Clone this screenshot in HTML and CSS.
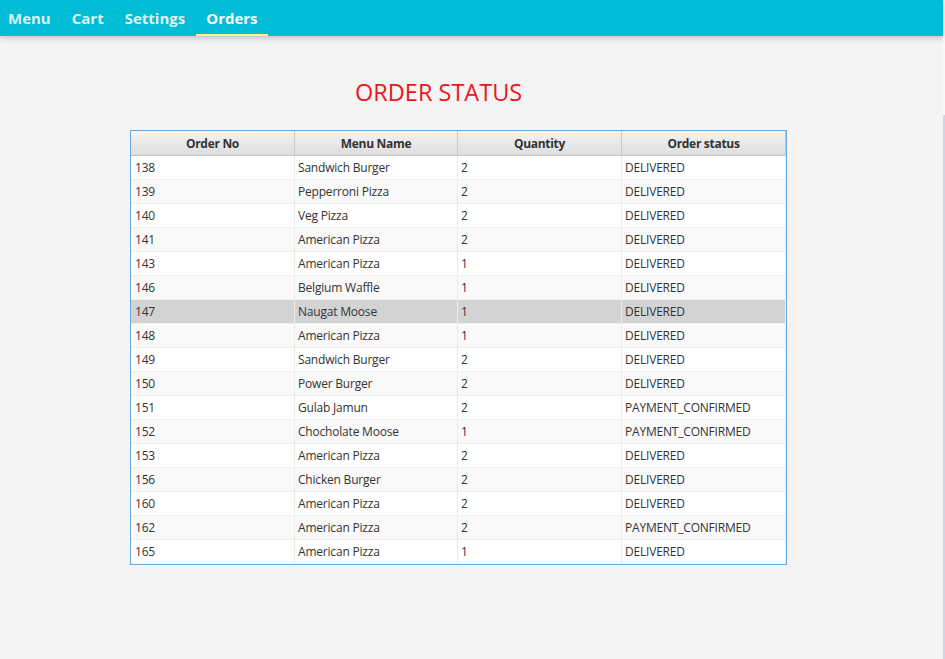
FILE: index.html
```html
<!DOCTYPE html>
<html>
<head>
<meta charset="utf-8">
<link rel="stylesheet" href="styles.css">
</head>
<body>
<div class="app">
  <div class="main">
    <nav class="topbar">
      <div class="tab">Menu</div>
      <div class="tab">Cart</div>
      <div class="tab">Settings</div>
      <div class="tab active">Orders</div>
    </nav>
    <div class="content">
      <h1 class="title">ORDER STATUS</h1>
      <div class="table-wrap">
        <table class="orders">
          <colgroup>
            <col class="c1"><col class="c2"><col class="c3"><col class="c4">
          </colgroup>
          <thead>
            <tr><th>Order No</th><th>Menu Name</th><th>Quantity</th><th>Order status</th></tr>
          </thead>
          <tbody>
            <tr><td>138</td><td>Sandwich Burger</td><td>2</td><td>DELIVERED</td></tr>
            <tr><td>139</td><td>Pepperroni Pizza</td><td>2</td><td>DELIVERED</td></tr>
            <tr><td>140</td><td>Veg Pizza</td><td>2</td><td>DELIVERED</td></tr>
            <tr><td>141</td><td>American Pizza</td><td>2</td><td>DELIVERED</td></tr>
            <tr><td>143</td><td>American Pizza</td><td>1</td><td>DELIVERED</td></tr>
            <tr><td>146</td><td>Belgium Waffle</td><td>1</td><td>DELIVERED</td></tr>
            <tr class="selected"><td>147</td><td>Naugat Moose</td><td>1</td><td>DELIVERED</td></tr>
            <tr><td>148</td><td>American Pizza</td><td>1</td><td>DELIVERED</td></tr>
            <tr><td>149</td><td>Sandwich Burger</td><td>2</td><td>DELIVERED</td></tr>
            <tr><td>150</td><td>Power Burger</td><td>2</td><td>DELIVERED</td></tr>
            <tr><td>151</td><td>Gulab Jamun</td><td>2</td><td>PAYMENT_CONFIRMED</td></tr>
            <tr><td>152</td><td>Chocholate Moose</td><td>1</td><td>PAYMENT_CONFIRMED</td></tr>
            <tr><td>153</td><td>American Pizza</td><td>2</td><td>DELIVERED</td></tr>
            <tr><td>156</td><td>Chicken Burger</td><td>2</td><td>DELIVERED</td></tr>
            <tr><td>160</td><td>American Pizza</td><td>2</td><td>DELIVERED</td></tr>
            <tr><td>162</td><td>American Pizza</td><td>2</td><td>PAYMENT_CONFIRMED</td></tr>
            <tr><td>165</td><td>American Pizza</td><td>1</td><td>DELIVERED</td></tr>
          </tbody>
        </table>
      </div>
    </div>
  </div>
  <div class="edge">
    <div class="edge-top"></div>
    <div class="edge-track"></div>
  </div>
</div>
</body>
</html>
```
FILE: styles.css
```css
* { box-sizing: border-box; }
html, body {
  margin: 0;
  padding: 0;
  height: 100%;
}
body {
  background: #f4f4f4;
  font-family: "Open Sans", "Noto Sans", sans-serif;
  color: #333;
  overflow: hidden;
}
.app {
  display: flex;
  height: 659px;
  width: 945px;
}
.main {
  width: 943px;
  flex: none;
}
.topbar {
  height: 36px;
  background: #00bcd4;
  display: flex;
  align-items: stretch;
  box-shadow: 0 2px 6px rgba(0, 0, 0, 0.22);
  position: relative;
  z-index: 2;
}
.tab {
  padding: 1px 10.5px 0;
  display: flex;
  align-items: center;
  font-weight: 700;
  font-size: 15px;
  color: #dff4f8;
  border-bottom: 2px solid transparent;
}
.tab:first-child { padding-left: 8px; }
.tab.active {
  color: #ffffff;
  border-bottom-color: #fff68a;
}
.content {
  padding-top: 40px;
}
.title {
  margin: 0;
  font-weight: 400;
  font-size: 23.5px;
  color: #f0141e;
  line-height: 32px;
  padding-left: 355px;
}
.table-wrap {
  margin-top: 22px;
  margin-left: 130px;
  width: 657px;
  border: 1px solid #61ade3;
  background: #fff;
}
.orders {
  width: 655px;
  border-collapse: separate;
  border-spacing: 0;
  table-layout: fixed;
  font-size: 12px;
}
.c1 { width: 164px; }
.c2 { width: 163px; }
.c3 { width: 164px; }
.c4 { width: 164px; }
.orders th {
  height: 25px;
  font-weight: 700;
  font-size: 12px;
  letter-spacing: -0.3px;
  color: #333;
  background: linear-gradient(#f3f3f3, #dedede);
  border-right: 1px solid #c9c9c9;
  border-bottom: 1px solid #c4c4c4;
  padding: 1px 0 0;
  text-align: center;
}
.orders td {
  height: 24px;
  padding: 0 0 0 3px;
  border-right: 1px solid #ececec;
  border-bottom: 1px solid #efefef;
  white-space: nowrap;
  color: #333;
  letter-spacing: -0.2px;
}
.orders td:first-child { padding-left: 4px; }
.orders tbody tr:nth-child(odd) td { background: #ffffff; }
.orders tbody tr:nth-child(even) td { background: #f9f9f9; }
.orders tbody tr.selected td { background: #d3d3d3; }
.orders tbody tr:last-child td { border-bottom: 1px solid #f4f4f4; }
.edge {
  width: 2px;
  flex: none;
  display: flex;
  flex-direction: column;
}
.edge-top {
  height: 115px;
  background: #f8f8f8;
}
.edge-track {
  flex: 1;
  background: #cdd6e6;
}
```
